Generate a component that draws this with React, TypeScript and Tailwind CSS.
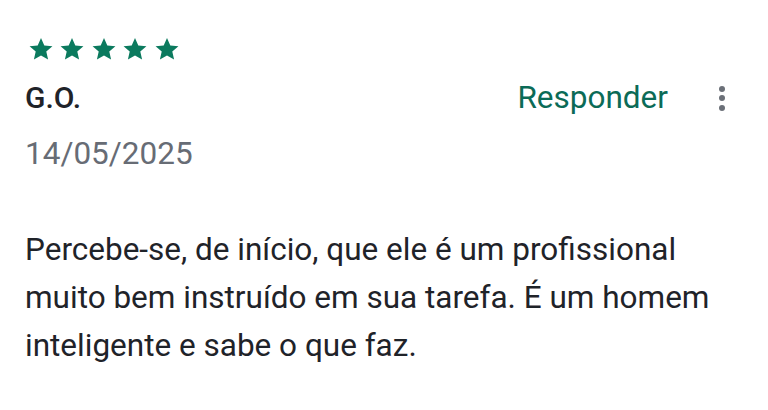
import React from "react";

const Star = () => (
  <svg width="26" height="26" viewBox="0 0 24 24" className="block">
    <path
      d="M12 1.8l3.05 6.9 7.5.7-5.67 5 1.67 7.36L12 17.9l-6.55 3.86 1.67-7.36-5.67-5 7.5-.7z"
      fill="#0b7a5e"
    />
  </svg>
);

export default function App() {
  return (
    <div
      className="w-[768px] h-[410px] bg-white overflow-hidden"
      style={{ fontFamily: "Roboto, 'Noto Sans', sans-serif" }}
    >
      <div className="pl-[25px] pr-[43px] pt-[36px]">
        <div className="flex gap-[5.5px] pl-[2.5px]">
          <Star />
          <Star />
          <Star />
          <Star />
          <Star />
        </div>
        <div className="flex items-center justify-between mt-[18px]">
          <div className="text-[30px] leading-[36px] font-medium text-[#1f2329]">G.O.</div>
          <div className="flex items-center">
            <span className="text-[31.5px] leading-[36px] text-[#0b6b57]">Responder</span>
            <div className="ml-[51px] flex flex-col gap-[3.5px] items-center">
              <span className="w-[6px] h-[6px] rounded-full bg-[#6b7078]" />
              <span className="w-[6px] h-[6px] rounded-full bg-[#6b7078]" />
              <span className="w-[6px] h-[6px] rounded-full bg-[#6b7078]" />
            </div>
          </div>
        </div>
        <div className="mt-[20px] text-[31.5px] leading-[36px] text-[#676c75]">14/05/2025</div>
        <p className="mt-[54px] text-[31.5px] leading-[48px] text-[#1f2329]">
          Percebe-se, de início, que ele é um profissional
          <br />
          muito bem instruído em sua tarefa. É um homem
          <br />
          inteligente e sabe o que faz.
        </p>
      </div>
    </div>
  );
}
